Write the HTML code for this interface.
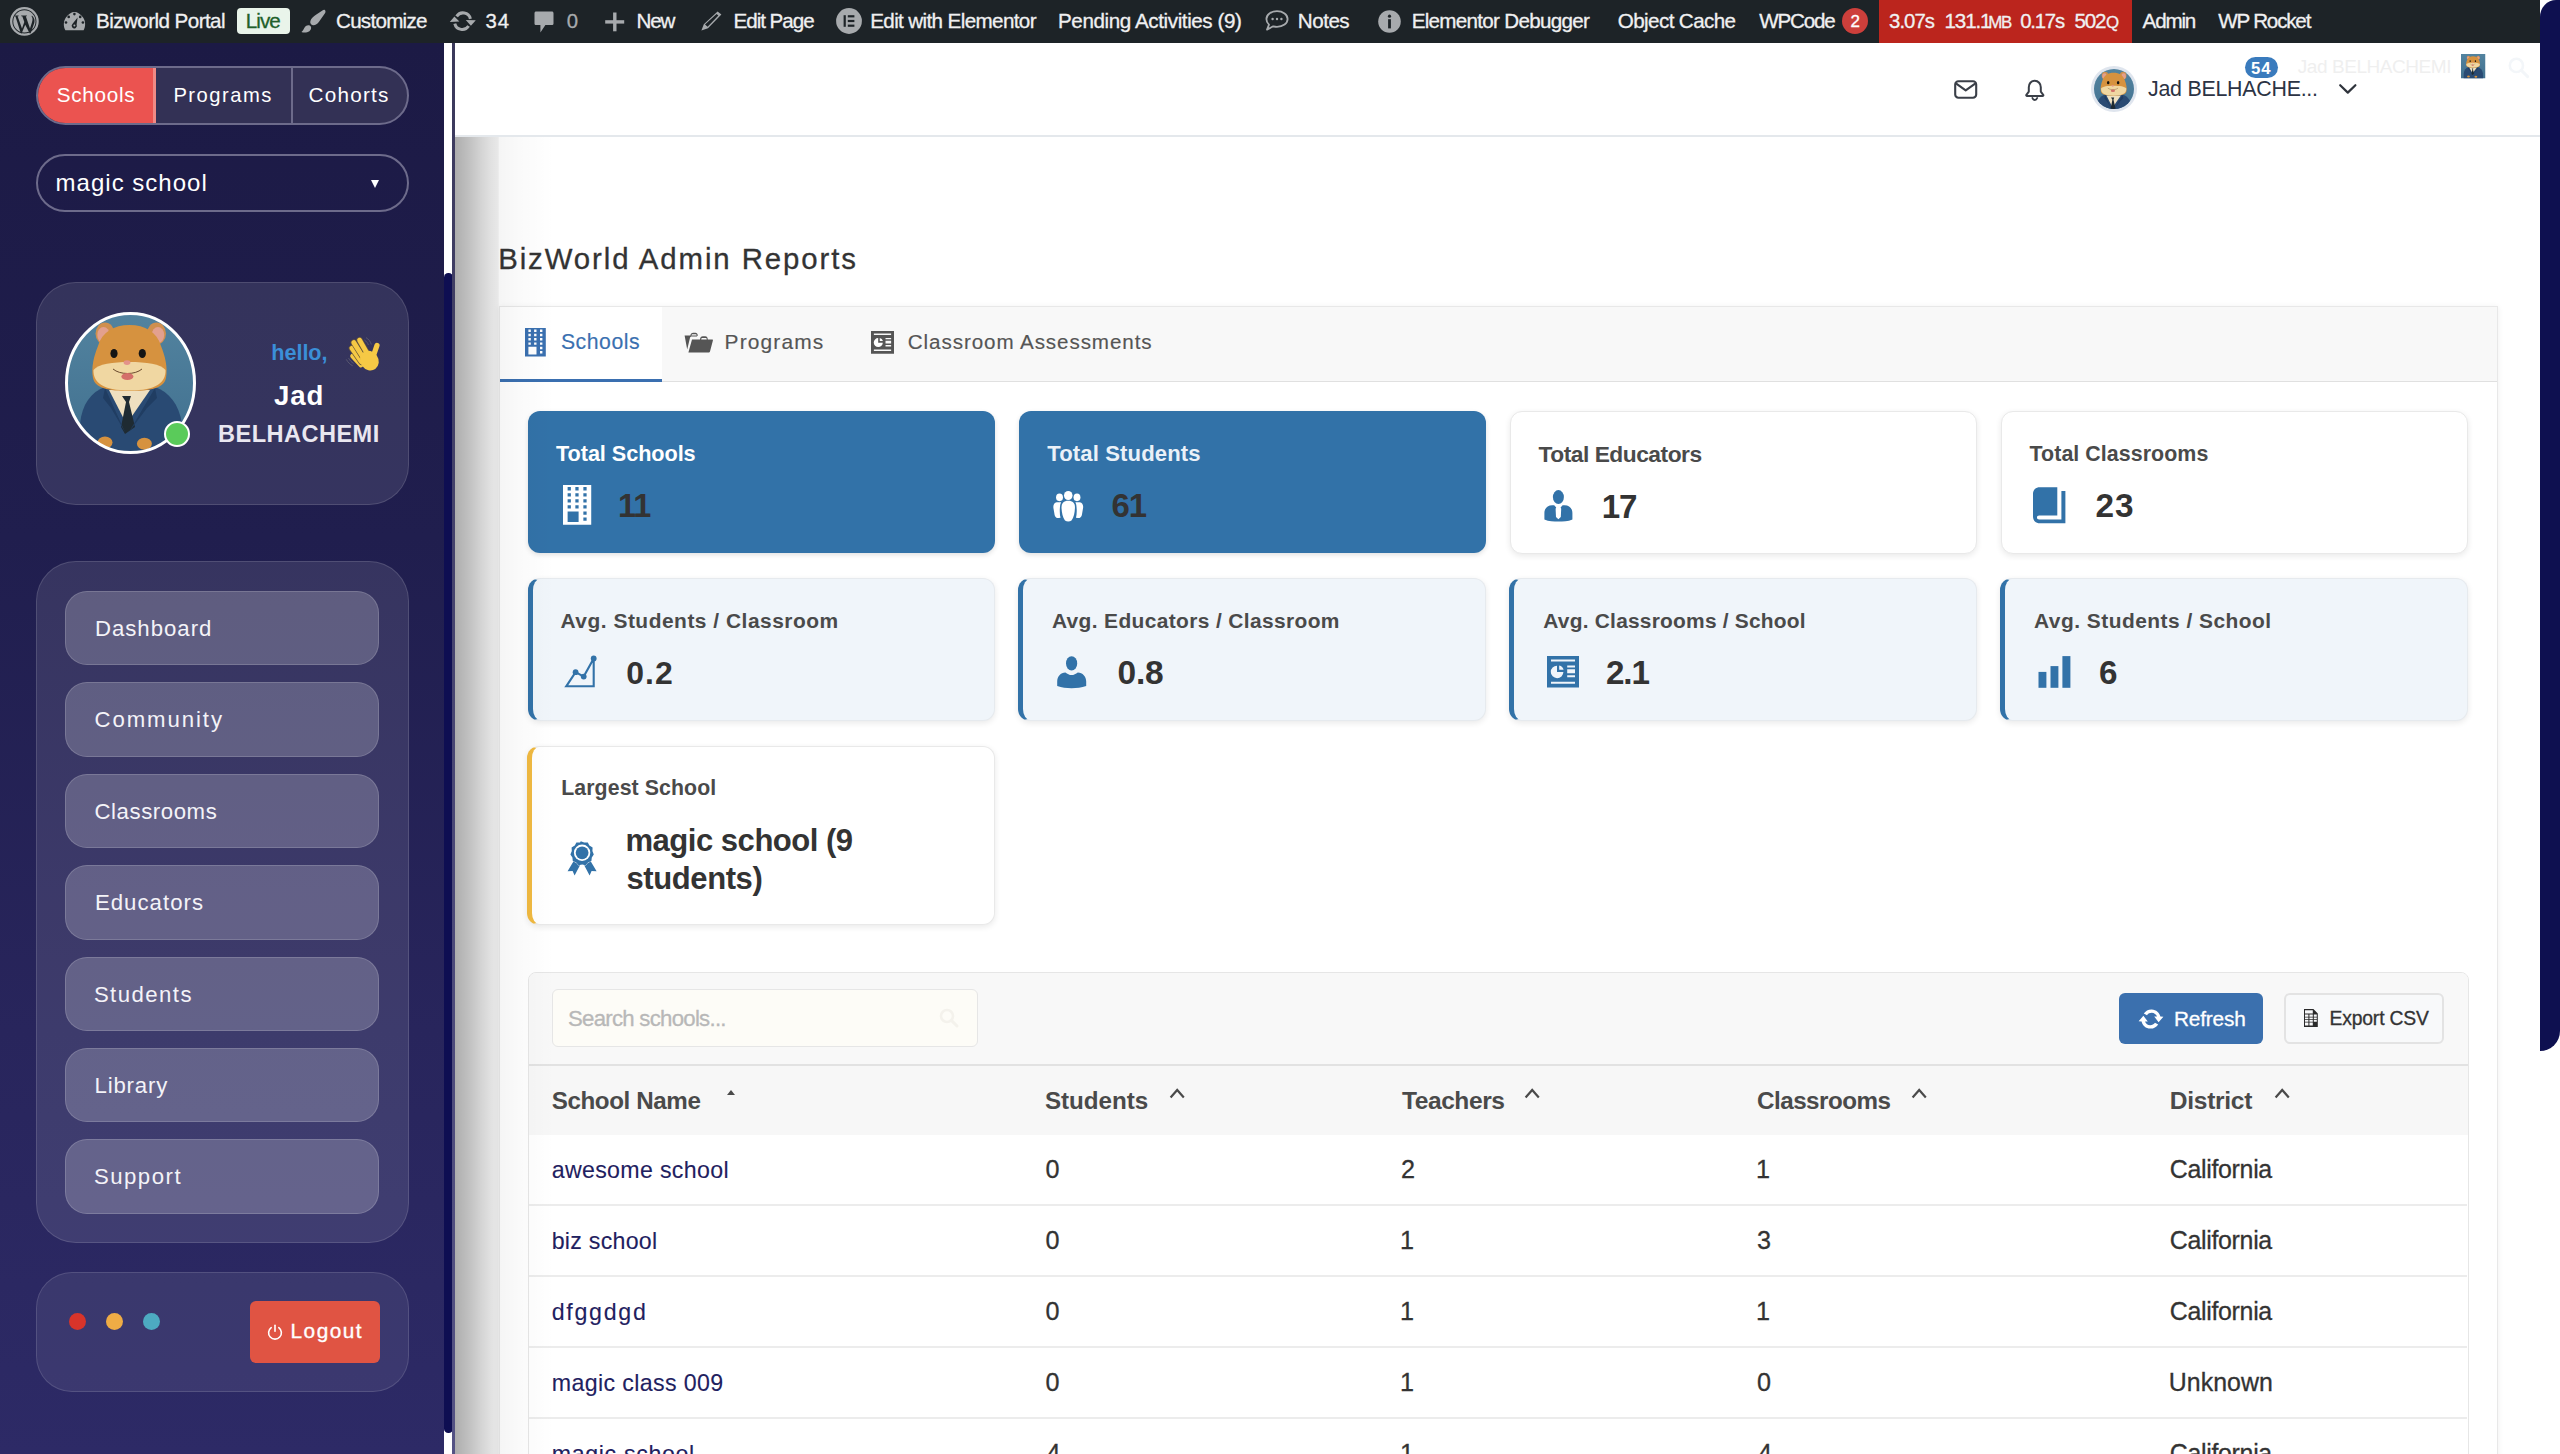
<!DOCTYPE html>
<html><head><meta charset="utf-8"><style>
html,body{margin:0;padding:0}
body{width:2560px;height:1454px;overflow:hidden;position:relative;background:#ffffff;font-family:"Liberation Sans",sans-serif}
.a{position:absolute;box-sizing:border-box}
.t{position:absolute;white-space:nowrap;font-family:"Liberation Sans",sans-serif}
svg{position:absolute;overflow:visible}
.glass{position:absolute;box-sizing:border-box;background:rgba(255,255,255,0.10);border:1.5px solid rgba(255,255,255,0.13)}
.nbtn{position:absolute;box-sizing:border-box;left:65px;width:314px;height:74.6px;border-radius:22px;background:rgba(255,255,255,0.20);border:1.5px solid rgba(255,255,255,0.16)}
.card{position:absolute;box-sizing:border-box;border-radius:12px}
.c1{background:#3272a8;box-shadow:0 2px 5px rgba(0,0,0,0.12)}
.c2{background:#ffffff;border:1.5px solid #e9e9e9;box-shadow:0 2px 6px rgba(0,0,0,0.09)}
.c3{background:#f0f5fa;border:1.5px solid #e6eaee;border-left:5px solid #3272a8;box-shadow:0 2px 6px rgba(0,0,0,0.09)}
.c4{background:#ffffff;border:1.5px solid #e9e9e9;border-left:5px solid #f0b941;box-shadow:0 2px 6px rgba(0,0,0,0.09)}
.rowline{position:absolute;left:529px;width:1938px;height:2px;background:#ececec}
</style></head><body>

<svg width="0" height="0" style="position:absolute;left:0;top:0">
 <defs>
  <linearGradient id="hbg" x1="0" y1="0" x2="0" y2="1"><stop offset="0" stop-color="#52839f"/><stop offset="1" stop-color="#41708f"/></linearGradient>
  <symbol id="ham" viewBox="0 0 131 142">
   <rect x="0" y="0" width="131" height="142" fill="url(#hbg)"/>
   <ellipse cx="40" cy="21.5" rx="9.5" ry="11" fill="#cf8f4e"/><ellipse cx="38.5" cy="23" rx="6.2" ry="8" fill="#e3a08e"/>
   <ellipse cx="91.5" cy="21.5" rx="9.5" ry="11" fill="#cf8f4e"/><ellipse cx="93" cy="23" rx="6.2" ry="8" fill="#e3a08e"/>
   <path d="M14 142 L15 112 C17 92 26 80 40 75 L90 75 C104 80 114 92 117 112 L118 142 Z" fill="#294a73"/>
   <path d="M44 78 L61.5 112 L85 78 Z" fill="#efe0c0"/>
   <path d="M57 84 L66 84 L64 90 L70 115 L60 122 L56 115 L61 90 Z" fill="#1f2b32"/>
   <path d="M40 76 L60 120 L46 96 L38 86 Z" fill="#203d62"/><path d="M90 76 L64 120 L82 96 L92 86 Z" fill="#203d62"/>
   <path d="M64.5 13 C80 13 92 20 96 34 C100 44 103 55 101 66 C99 76 86 79 64.5 79 C43 79 30 76 28 66 C26 55 29 44 33 34 C37 20 49 13 64.5 13 Z" fill="#d6923f"/>
   <path d="M28.5 58 C33 52 48 50 64.5 50 C81 50 96 52 100.5 58 C101 70 92 78.5 64.5 78.5 C37 78.5 28 70 28.5 58 Z" fill="#f0d7a2"/>
   <ellipse cx="49" cy="41.5" rx="3.6" ry="4.6" fill="#141414"/><ellipse cx="77.3" cy="41.5" rx="3.6" ry="4.6" fill="#141414"/>
   <ellipse cx="62" cy="50.6" rx="3.4" ry="2.3" fill="#e3928a"/>
   <path d="M48 57 C55 63 70 63 77 57" fill="none" stroke="#5a3a20" stroke-width="0.9"/>
   <ellipse cx="62.4" cy="64.5" rx="6" ry="3.6" fill="#d4706a"/>
   <ellipse cx="40" cy="130.6" rx="7.5" ry="6" fill="#d6923f"/><ellipse cx="79.4" cy="131.7" rx="7.5" ry="6" fill="#d6923f"/>
  </symbol>
 </defs>
</svg>

<!-- admin bar -->
<div class="a" style="left:0;top:0;width:2540px;height:43px;background:#1d2327"></div>
<div class="a" style="left:1879px;top:0;width:253.4px;height:43px;background:#bb251d"></div>
<!-- wp logo -->
<svg style="left:9.7px;top:6.9px" width="29" height="29" viewBox="0 0 29 29">
  <circle cx="14.4" cy="14.4" r="13.2" fill="none" stroke="#a7aaad" stroke-width="2.3"/>
  <circle cx="14.4" cy="14.4" r="11.1" fill="#a7aaad"/>
  <path d="M4.3 8.4 L8.6 8.4 L8.6 9.2 L7.6 9.3 L12.0 21.6 L14.3 15.0 L12.3 9.3 L11.2 9.2 L11.2 8.4 L16.9 8.4 L16.9 9.2 L15.8 9.3 L20.0 21.5 L22.0 15.3 C22.9 12.4 22.6 11.0 21.6 9.6 L21.9 8.4 C24.4 10.5 25.0 13.3 24.3 16.0 L20.6 26.2 L19.8 26.6 L15.2 17.8 L11.6 26.6 L10.8 26.3 L5.4 9.3 L4.3 9.2 Z" fill="#1d2327"/>
</svg>
<!-- dashboard gauge -->
<svg style="left:62.5px;top:10.9px" width="23" height="20" viewBox="0 0 23 20">
  <path d="M2.4 19.2 C0.2 15.4 0.3 10.3 2.9 6.4 C5.2 2.9 8.7 0.9 11.5 0.9 C14.3 0.9 17.8 2.9 20.1 6.4 C22.7 10.3 22.8 15.4 20.6 19.2 Z" fill="#a7aaad"/>
  <circle cx="11.4" cy="3.1" r="1.3" fill="#1d2327"/><circle cx="5.7" cy="5.9" r="1.3" fill="#1d2327"/><circle cx="17.2" cy="5.9" r="1.3" fill="#1d2327"/>
  <circle cx="3.0" cy="11.5" r="1.3" fill="#1d2327"/><circle cx="19.9" cy="11.5" r="1.3" fill="#1d2327"/>
  <path d="M14.6 6.6 L13.6 13.6 A2.6 2.6 0 1 1 9.4 13.0 Z" fill="#1d2327"/>
  <circle cx="11.4" cy="14.6" r="1.0" fill="#a7aaad"/>
</svg>
<!-- live badge -->
<div class="a" style="left:237.3px;top:8px;width:52.7px;height:26px;background:#e9f4ea;border-radius:4px"></div>
<!-- brush -->
<svg style="left:298px;top:6px" width="32" height="32" viewBox="0 0 32 32">
  <path d="M26.8 4.0 C27.9 4.8 27.6 6.4 26.8 7.6 L21.0 15.8 C19.4 18.0 17.2 19.4 15.0 19.2 C13.0 19.0 11.8 17.2 12.4 15.0 C13.2 12.4 15.6 10.4 18.0 8.8 L24.4 4.4 C25.2 3.9 26.1 3.6 26.8 4.0 Z" fill="#a7aaad"/>
  <path d="M12.8 20.6 C11.8 18.9 9.6 18.8 7.9 20.0 C6.4 21.2 6.0 22.8 5.2 24.0 C4.6 25.0 3.8 25.6 3.4 26.0 C5.6 26.8 9.2 26.8 11.4 25.2 C13.0 24.0 13.6 22.0 12.8 20.6 Z" fill="#a7aaad"/>
</svg>
<!-- updates -->
<svg style="left:446px;top:6px" width="34" height="32" viewBox="0 0 34 32">
  <path d="M10.6 10.4 A7.6 7.6 0 0 1 24.4 12.8" fill="none" stroke="#a7aaad" stroke-width="3"/>
  <path d="M19.8 14.0 L29.8 14.2 L24.9 19.8 Z" fill="#a7aaad"/>
  <path d="M22.6 20.0 A7.6 7.6 0 0 1 8.8 17.6" fill="none" stroke="#a7aaad" stroke-width="3"/>
  <path d="M3.8 16.0 L13.4 15.6 L8.4 10.4 Z" fill="#a7aaad"/>
</svg>
<!-- comments -->
<svg style="left:534px;top:11px" width="20" height="22" viewBox="0 0 20 22">
  <path d="M2.2 0.5 L17.8 0.5 C18.8 0.5 19.5 1.2 19.5 2.2 L19.5 12.4 C19.5 13.4 18.8 14.1 17.8 14.1 L11.4 14.1 L6.4 21.5 L6.4 14.1 L2.2 14.1 C1.2 14.1 0.5 13.4 0.5 12.4 L0.5 2.2 C0.5 1.2 1.2 0.5 2.2 0.5 Z" fill="#a7aaad"/>
</svg>
<!-- plus -->
<svg style="left:605px;top:12px" width="20" height="20" viewBox="0 0 20 20">
  <rect x="8.1" y="0.5" width="3.4" height="18.8" fill="#a7aaad"/><rect x="0.2" y="8.2" width="19" height="3.4" fill="#a7aaad"/>
</svg>
<!-- pencil -->
<svg style="left:700.6px;top:11.25px" width="21" height="20" viewBox="0 0 21 20">
  <path d="M16.6 0.4 L20.4 3.6 L7.0 17.2 L0.4 19.6 L2.8 13.2 Z M4.0 13.4 L6.6 15.8 L17.4 4.6 L15.6 3.0 Z" fill="#a7aaad" fill-rule="evenodd"/>
</svg>
<!-- elementor -->
<svg style="left:836px;top:7.5px" width="26" height="26" viewBox="0 0 26 26">
  <circle cx="13" cy="13" r="12.9" fill="#a7aaad"/>
  <rect x="7.6" y="7.2" width="2.2" height="11.6" fill="#1d2327"/>
  <rect x="11.8" y="7.2" width="6.6" height="2.2" fill="#1d2327"/><rect x="11.8" y="11.9" width="6.6" height="2.2" fill="#1d2327"/><rect x="11.8" y="16.6" width="6.6" height="2.2" fill="#1d2327"/>
</svg>
<!-- notes bubble -->
<svg style="left:1265.3px;top:10px" width="24" height="21" viewBox="0 0 24 21">
  <path d="M12 1.2 C18 1.2 22.6 4.7 22.6 9.0 C22.6 13.3 18 16.8 12 16.8 C10.6 16.8 9.4 16.6 8.2 16.3 L2.0 19.6 L4.0 14.6 C2.4 13.2 1.4 11.2 1.4 9.0 C1.4 4.7 6.0 1.2 12 1.2 Z" fill="none" stroke="#a7aaad" stroke-width="1.8" stroke-linejoin="round"/>
  <circle cx="7.6" cy="9" r="1.2" fill="#a7aaad"/><circle cx="12" cy="9" r="1.2" fill="#a7aaad"/><circle cx="16.4" cy="9" r="1.2" fill="#a7aaad"/>
</svg>
<!-- info -->
<svg style="left:1377.8px;top:9.7px" width="23" height="23" viewBox="0 0 23 23">
  <circle cx="11.5" cy="11.5" r="11.3" fill="#a7aaad"/>
  <circle cx="11.5" cy="6.2" r="1.6" fill="#1d2327"/><rect x="10.1" y="9.2" width="2.8" height="9.2" fill="#1d2327"/>
</svg>
<!-- wpcode badge -->
<div class="a" style="left:1842.4px;top:8.2px;width:26px;height:26px;border-radius:50%;background:#cd3f3b"></div>

<!-- sidebar -->
<div class="a" style="left:0;top:43px;width:444px;height:1411px;background:linear-gradient(180deg,#1c1a45 0%,#201e4e 35%,#28255c 70%,#2d2a66 100%)"></div>
<div class="a" style="left:444px;top:43px;width:8.5px;height:1411px;background:#ffffff"></div>
<div class="a" style="left:444px;top:273px;width:8.5px;height:1160px;background:#0e0e52;border-radius:4.25px"></div>
<div class="a" style="left:452.3px;top:43px;width:2.7px;height:1411px;background:linear-gradient(180deg,#3b395b,#4a4878 60%,#545284)"></div>

<!-- segmented toggle -->
<div class="a" style="left:36px;top:66px;width:373px;height:59px;border:2px solid #6d6b8b;border-radius:30px;background:#333155;overflow:hidden">
  <div class="a" style="left:0;top:0;width:115px;height:55px;background:#eb5350"></div>
  <div class="a" style="left:114.8px;top:0;width:2.8px;height:55px;background:#f08a85"></div>
  <div class="a" style="left:252.5px;top:0;width:2px;height:55px;background:#6d6b8b"></div>
</div>
<!-- select -->
<div class="a" style="left:36px;top:154px;width:373px;height:58px;border:2px solid #6d6b8b;border-radius:30px"></div>
<div class="a" style="left:371px;top:180px;width:0;height:0;border-left:4.3px solid transparent;border-right:4.3px solid transparent;border-top:8px solid #ffffff"></div>

<!-- profile card -->
<div class="glass" style="left:35.5px;top:282px;width:373.5px;height:222.5px;border-radius:40px"></div>
<svg style="left:65px;top:312px" width="131" height="142" viewBox="0 0 131 142">
  <clipPath id="avc"><ellipse cx="65.5" cy="71" rx="64" ry="69.5"/></clipPath>
  <use href="#ham" x="0" y="0" width="131" height="142" clip-path="url(#avc)"/>
  <ellipse cx="65.5" cy="71" rx="64" ry="69.5" fill="none" stroke="#ffffff" stroke-width="3"/>
</svg>
<div class="a" style="left:163.6px;top:420.8px;width:26px;height:26px;border-radius:50%;background:#5acb5a;border:2.6px solid #ffffff"></div>
<!-- wave -->
<svg style="left:340px;top:330px" width="46" height="46" viewBox="0 0 46 46">
  <g stroke-linecap="round" fill="none">
    <line x1="12.6" y1="26" x2="21" y2="35" stroke-width="4.8" stroke="#f6c945"/>
    <line x1="11.9" y1="18.2" x2="21.5" y2="32" stroke-width="6.2" stroke="#6e5c3a"/>
    <line x1="11.9" y1="18.2" x2="21.5" y2="32" stroke-width="4.8" stroke="#f6c945"/>
    <line x1="13.8" y1="12.6" x2="23.5" y2="28" stroke-width="6.2" stroke="#6e5c3a"/>
    <line x1="13.8" y1="12.6" x2="23.5" y2="28" stroke-width="4.8" stroke="#f6c945"/>
    <line x1="19.6" y1="10.2" x2="28" y2="25" stroke-width="6.2" stroke="#6e5c3a"/>
    <line x1="19.6" y1="10.2" x2="28" y2="25" stroke-width="4.8" stroke="#f6c945"/>
    <line x1="37" y1="15.4" x2="33" y2="27" stroke-width="5.2" stroke="#f6c945"/>
  </g>
  <path d="M12 25.5 L17 24 L9 18 L11 15 L15 12 L20 9 L36 24 L38.5 27 C40 33 38 39 31.5 40.6 C26 41.8 21 38.6 15.6 33.6 C14 32 12.6 30 12 28 Z" fill="none"/>
  <ellipse cx="29.4" cy="30.6" rx="9" ry="10.2" transform="rotate(-35 29.4 30.6)" fill="#f6c945"/>
  <path d="M26 7.6 C28.6 9.2 30.6 11.6 31.3 14.5" fill="none" stroke="#5c5b72" stroke-width="0.9"/>
  <path d="M24.4 10 C26.4 11.4 27.8 13 28.4 15" fill="none" stroke="#5c5b72" stroke-width="0.9"/>
  <path d="M6.3 29.4 C8 32.4 10 34.4 12.7 35.8" fill="none" stroke="#5c5b72" stroke-width="0.9"/>
  <path d="M8.6 28.2 C10 30.6 11.6 32.2 13.6 33.4" fill="none" stroke="#5c5b72" stroke-width="0.9"/>
</svg>

<!-- nav card -->
<div class="glass" style="left:35.5px;top:561px;width:373.5px;height:682px;border-radius:40px"></div>
<div class="nbtn" style="top:590.9px"></div>
<div class="nbtn" style="top:682.3px"></div>
<div class="nbtn" style="top:773.7px"></div>
<div class="nbtn" style="top:865.1px"></div>
<div class="nbtn" style="top:956.5px"></div>
<div class="nbtn" style="top:1047.9px"></div>
<div class="nbtn" style="top:1139.3px"></div>

<!-- bottom card -->
<div class="glass" style="left:35.5px;top:1272px;width:373.5px;height:120px;border-radius:36px;background:rgba(255,255,255,0.075)"></div>
<div class="a" style="left:69.2px;top:1312.8px;width:17px;height:17px;border-radius:50%;background:#d8342a"></div>
<div class="a" style="left:106.2px;top:1312.8px;width:17px;height:17px;border-radius:50%;background:#efac45"></div>
<div class="a" style="left:143px;top:1312.8px;width:17px;height:17px;border-radius:50%;background:#4daac1"></div>
<div class="a" style="left:250px;top:1301px;width:130px;height:61.6px;border-radius:6px;background:#e05443"></div>
<svg style="left:267px;top:1324px" width="16" height="16" viewBox="0 0 16 16">
  <path d="M4.2 3.6 A6.4 6.4 0 1 0 11.8 3.6" fill="none" stroke="#ffffff" stroke-width="1.6" stroke-linecap="round"/>
  <path d="M8 1.2 L8 7.2" stroke="#ffffff" stroke-width="1.6" stroke-linecap="round"/>
</svg>

<!-- main header -->
<div class="a" style="left:455px;top:43px;width:2085px;height:93px;background:#ffffff"></div>
<div class="a" style="left:455px;top:135px;width:2085px;height:2px;background:#e4e8ec"></div>

<!-- header right -->
<svg style="left:1954px;top:79.5px" width="24" height="19" viewBox="0 0 24 19">
  <rect x="1.2" y="1.2" width="21" height="16.6" rx="3.2" fill="none" stroke="#3a3f48" stroke-width="2.1"/>
  <path d="M2.6 3.8 L11.7 10.4 L20.8 3.8" fill="none" stroke="#3a3f48" stroke-width="2.1" stroke-linejoin="round" stroke-linecap="round"/>
</svg>
<svg style="left:2024.5px;top:78.5px" width="20" height="22" viewBox="0 0 20 22">
  <path d="M9.7 1.8 C6.0 1.8 3.8 4.8 3.8 8.2 L3.8 12.6 L1.4 15.8 C1.0 16.4 1.4 17.0 2.0 17.0 L17.6 17.0 C18.2 17.0 18.6 16.4 18.2 15.8 L15.8 12.6 L15.8 8.2 C15.8 4.8 13.4 1.8 9.7 1.8 Z" fill="none" stroke="#3a3f48" stroke-width="2" stroke-linejoin="round"/>
  <path d="M7.4 19.0 C8.0 20.4 8.8 21.0 9.8 21.0 C10.8 21.0 11.6 20.4 12.2 19.0" fill="none" stroke="#3a3f48" stroke-width="1.9" stroke-linecap="round"/>
</svg>
<div class="a" style="left:2090.5px;top:66px;width:46px;height:46px;border-radius:50%;background:#dfe5ee"></div>
<svg style="left:2093.5px;top:69px" width="40" height="40" viewBox="0 0 40 40">
  <clipPath id="hc1"><circle cx="20" cy="20" r="20"/></clipPath>
  <g clip-path="url(#hc1)"><use href="#ham" x="-3" y="-1" width="46" height="50"/></g>
</svg>
<svg style="left:2338.5px;top:84px" width="18" height="10" viewBox="0 0 18 10">
  <path d="M1.2 1.2 L8.8 8.6 L16.4 1.2" fill="none" stroke="#2f343c" stroke-width="2.2" stroke-linecap="round" stroke-linejoin="round"/>
</svg>
<div class="a" style="left:2244.6px;top:57px;width:33.4px;height:21px;border-radius:11px;background:#3a7bbd"></div>
<svg style="left:2460.6px;top:54.3px" width="24.5" height="24.5" viewBox="0 0 131 142" preserveAspectRatio="none">
  <use href="#ham" x="0" y="0" width="131" height="142"/>
</svg>
<svg style="left:2507.5px;top:56.5px" width="21" height="21" viewBox="0 0 21 21">
  <circle cx="8.4" cy="8.4" r="6.6" fill="none" stroke="#f3f6f9" stroke-width="2.6"/>
  <path d="M13.4 13.4 L19.6 19.6" stroke="#f3f6f9" stroke-width="3" stroke-linecap="round"/>
</svg>

<!-- right navy strip -->
<div class="a" style="left:2540px;top:0;width:20px;height:1051px;background:#0e1050;border-top-left-radius:16px 17px;border-bottom-right-radius:20px"></div>

<!-- tabs container -->
<div class="a" style="left:498.5px;top:306px;width:1999px;height:1200px;background:#ffffff;border:1.5px solid #e8e8e8;box-shadow:0 1px 6px rgba(0,0,0,0.07)"></div>
<div class="a" style="left:499.5px;top:307px;width:1997px;height:75px;background:#f8f8f8;border-bottom:1.5px solid #e0e0e0"></div>
<div class="a" style="left:499.5px;top:307px;width:162.5px;height:74px;background:#ffffff"></div>
<div class="a" style="left:499.5px;top:378.5px;width:162.5px;height:3px;background:#3a6fb0"></div>

<!-- tab icons -->
<svg style="left:525px;top:327.5px" width="21" height="28.5" viewBox="0 0 21 28.5">
  <path fill="#3a70b0" fill-rule="evenodd" d="M0 0 H20.8 V28.4 H0 Z M3.4 1.5 h2.4 v2.4 h-2.4 Z M9.1 1.5 h2.4 v2.4 h-2.4 Z M15 1.5 h2.4 v2.4 h-2.4 Z M3.4 5.8 h2.4 v2.4 h-2.4 Z M9.1 5.8 h2.4 v2.4 h-2.4 Z M15 5.8 h2.4 v2.4 h-2.4 Z M3.4 10.1 h2.4 v2.4 h-2.4 Z M9.1 10.1 h2.4 v2.4 h-2.4 Z M15 10.1 h2.4 v2.4 h-2.4 Z M3.4 14.4 h2.4 v2.4 h-2.4 Z M9.1 14.4 h2.4 v2.4 h-2.4 Z M15 14.4 h2.4 v2.4 h-2.4 Z M15 18.8 h2.4 v2.4 h-2.4 Z M15 23.1 h2.4 v2.4 h-2.4 Z M3.4 18.8 h8.1 v7.6 h-8.1 Z"/>
</svg>
<svg style="left:684px;top:331.5px" width="30" height="21" viewBox="0 0 30 21">
  <path fill="#555555" d="M0.6 3.6 L6.4 3.6 C6.6 1.6 7.6 0.8 9.2 0.8 L11.4 0.8 C12.8 0.8 13.6 1.8 13.8 3.4 L12.8 4.4 L7.6 4.4 C6.8 4.4 6.2 5.0 6.0 5.8 L3.2 17.6 Z"/>
  <path fill="#555555" d="M8.0 7.4 L16.0 7.4 C16.2 5.4 17.2 4.2 18.8 4.2 L21.2 4.2 C22.8 4.2 23.6 5.4 23.8 7.4 L28.2 7.4 C28.8 7.4 29.0 7.8 28.9 8.4 L26.0 19.4 C25.8 20.0 25.4 20.4 24.8 20.4 L4.4 20.4 Z"/>
  <path fill="#f8f8f8" d="M18.4 6.0 L21.6 6.0 C22.4 6.0 22.6 6.4 22.8 7.4 L17.2 7.4 C17.4 6.4 17.6 6.0 18.4 6.0 Z M8.6 2.2 L11.8 2.2 C12.4 2.2 12.6 2.8 12.7 3.6 L7.4 3.6 C7.6 2.6 8.0 2.2 8.6 2.2 Z"/>
</svg>
<svg style="left:871.3px;top:330.7px" width="23" height="23" viewBox="0 0 32 32">
  <path fill="#555555" fill-rule="evenodd" d="M0 0 H32 V31.7 H0 Z M4 3.6 h24 v2 h-24 Z M4 25.9 h24 v2 h-24 Z M20.2 9.6 h7.8 v1.9 h-7.8 Z M20.2 13.5 h7.8 v4 h-7.8 Z M20.2 19.5 h7.8 v1.9 h-7.8 Z"/>
  <path fill="#ffffff" d="M10 9.8 L10 16.2 L16.4 16.2 A6.3 6.3 0 1 1 10 9.8 Z"/>
  <path fill="#ffffff" d="M12.2 9.6 A6 6 0 0 1 16.6 14 L12.2 14 Z"/>
</svg>

<!-- row 1 cards -->
<div class="card c1" style="left:528px;top:411.2px;width:466.8px;height:141.8px"></div>
<div class="card c1" style="left:1018.8px;top:411.2px;width:466.8px;height:141.8px"></div>
<div class="card c2" style="left:1509.6px;top:411.2px;width:467.6px;height:142.6px"></div>
<div class="card c2" style="left:2000.6px;top:411.2px;width:467.2px;height:142.6px"></div>

<!-- row 2 cards -->
<div class="card c3" style="left:527.6px;top:578.3px;width:467.6px;height:142.4px"></div>
<div class="card c3" style="left:1018.4px;top:578.3px;width:467.2px;height:142.4px"></div>
<div class="card c3" style="left:1509.4px;top:578.3px;width:467.8px;height:142.4px"></div>
<div class="card c3" style="left:2000.4px;top:578.3px;width:467.4px;height:142.4px"></div>

<!-- row 3 -->
<div class="card c4" style="left:527.3px;top:745.8px;width:467.8px;height:179px"></div>

<!-- card icons -->
<svg style="left:562.5px;top:485px" width="28.5" height="40" viewBox="0 0 21 28.5" preserveAspectRatio="none">
  <path fill="#ffffff" fill-rule="evenodd" d="M0 0 H20.8 V28.4 H0 Z M3.4 1.5 h2.4 v2.4 h-2.4 Z M9.1 1.5 h2.4 v2.4 h-2.4 Z M15 1.5 h2.4 v2.4 h-2.4 Z M3.4 5.8 h2.4 v2.4 h-2.4 Z M9.1 5.8 h2.4 v2.4 h-2.4 Z M15 5.8 h2.4 v2.4 h-2.4 Z M3.4 10.1 h2.4 v2.4 h-2.4 Z M9.1 10.1 h2.4 v2.4 h-2.4 Z M15 10.1 h2.4 v2.4 h-2.4 Z M3.4 14.4 h2.4 v2.4 h-2.4 Z M9.1 14.4 h2.4 v2.4 h-2.4 Z M15 14.4 h2.4 v2.4 h-2.4 Z M15 18.8 h2.4 v2.4 h-2.4 Z M15 23.1 h2.4 v2.4 h-2.4 Z M3.4 18.8 h8.1 v7.6 h-8.1 Z"/>
</svg>
<svg style="left:1052.5px;top:491px" width="30.5" height="30.5" viewBox="0 0 30 30">
  <ellipse cx="6.4" cy="6.2" rx="3.4" ry="3.8" fill="#fff"/><ellipse cx="23.6" cy="6.2" rx="3.4" ry="3.8" fill="#fff"/>
  <ellipse cx="15" cy="4.4" rx="4.2" ry="4.4" fill="#fff"/>
  <path fill="#fff" d="M3.6 11.0 C1.2 11.6 0.0 13.6 0.4 16.6 L1.6 23.6 C2.0 25.8 3.6 26.8 5.6 26.6 L7.4 26.4 C6.6 23.0 6.4 19.0 7.0 14.4 C7.2 12.8 7.6 11.8 8.0 11.0 Z"/>
  <path fill="#fff" d="M26.4 11.0 C28.8 11.6 30.0 13.6 29.6 16.6 L28.4 23.6 C28.0 25.8 26.4 26.8 24.4 26.6 L22.6 26.4 C23.4 23.0 23.6 19.0 23.0 14.4 C22.8 12.8 22.4 11.8 22.0 11.0 Z"/>
  <path fill="#fff" d="M15 9.6 C10.4 9.6 8.2 12.0 8.4 16.8 C8.6 21.4 9.6 26.4 11.8 29.0 C13.6 30.4 16.4 30.4 18.2 29.0 C20.4 26.4 21.4 21.4 21.6 16.8 C21.8 12.0 19.6 9.6 15 9.6 Z"/>
</svg>
<svg style="left:1544px;top:489.5px" width="29" height="32" viewBox="0 0 29 32">
  <ellipse cx="14.4" cy="7.1" rx="5.5" ry="7" fill="#3272a8"/>
  <path fill="#3272a8" d="M0.4 29.6 L0.4 23.0 C0.4 18.2 3.8 15.2 8.2 15.2 L10.2 15.2 L12.2 17.6 L11.6 18.8 L12.0 27.0 L14.4 29.2 L16.8 27.0 L17.2 18.8 L16.6 17.6 L18.6 15.2 L20.6 15.2 C25.0 15.2 28.4 18.2 28.4 23.0 L28.4 29.6 C24.0 31.6 19.0 31.6 14.4 31.6 C9.8 31.6 4.8 31.6 0.4 29.6 Z"/>
</svg>
<svg style="left:2033.4px;top:487px" width="32.5" height="36.2" viewBox="0 0 32.5 36.2">
  <path fill="#3272a8" d="M24.3 0.2 L24.3 28.4 L6.2 28.4 C4.6 28.4 4.0 29.2 4.0 30.4 C4.0 31.6 4.6 32.4 6.2 32.4 L28.4 32.4 L28.4 4.0 L32.4 4.0 L32.4 36.2 L6.8 36.2 C2.8 36.2 0.0 33.4 0.0 29.4 L0.0 6.8 C0.0 2.8 2.8 0.2 6.8 0.2 Z"/>
</svg>
<svg style="left:555px;top:645px" width="60" height="50" viewBox="0 0 60 50">
  <path d="M11.2 41.3 L20.6 27.2 L28.7 31.6 L38.7 13.4 L38.7 41.3 Z" fill="none" stroke="#3272a8" stroke-width="2.1" stroke-linejoin="miter"/>
  <circle cx="20.6" cy="27.2" r="2.9" fill="#3272a8"/><circle cx="28.7" cy="31.6" r="2.9" fill="#3272a8"/><circle cx="38.7" cy="13.4" r="2.9" fill="#3272a8"/>
</svg>
<svg style="left:1057.2px;top:655.5px" width="29.5" height="32.5" viewBox="0 0 29.5 32.5">
  <ellipse cx="14.6" cy="7.4" rx="5.6" ry="7.2" fill="#3272a8"/>
  <path fill="#3272a8" d="M0.2 30.0 L0.2 25.4 C0.2 20.4 3.6 16.4 8.4 16.4 C10.4 17.8 12.4 19.0 14.6 19.0 C16.8 19.0 18.8 17.8 20.8 16.4 C25.6 16.4 29.2 20.4 29.2 25.4 L29.2 30.0 C24.6 31.8 19.6 32.2 14.6 32.2 C9.6 32.2 4.6 31.8 0.2 30.0 Z"/>
</svg>
<svg style="left:1546.8px;top:655.6px" width="32" height="31.7" viewBox="0 0 32 32" preserveAspectRatio="none">
  <path fill="#3272a8" fill-rule="evenodd" d="M0 0 H32 V31.7 H0 Z M4 3.6 h24 v2 h-24 Z M4 25.9 h24 v2 h-24 Z M20.2 9.6 h7.8 v1.9 h-7.8 Z M20.2 13.5 h7.8 v4 h-7.8 Z M20.2 19.5 h7.8 v1.9 h-7.8 Z"/>
  <path fill="#f0f5fa" d="M10 9.8 L10 16.2 L16.4 16.2 A6.3 6.3 0 1 1 10 9.8 Z"/>
  <path fill="#f0f5fa" d="M12.2 9.6 A6 6 0 0 1 16.6 14 L12.2 14 Z"/>
</svg>
<svg style="left:2037.5px;top:655.5px" width="33" height="32" viewBox="0 0 33 32">
  <rect x="0.5" y="15.9" width="7.9" height="15.9" fill="#3272a8"/>
  <rect x="12.5" y="10.1" width="7.9" height="21.7" fill="#3272a8"/>
  <rect x="24.4" y="0.1" width="8" height="31.7" fill="#3272a8"/>
</svg>
<svg style="left:566px;top:841px" width="30" height="35" viewBox="0 0 30 35">
  <path fill="#3272a8" d="M14.8 0.2 L18.2 1.6 L21.8 1.4 L23.4 4.6 L26.6 6.4 L26.4 10.0 L27.8 13.4 L25.8 16.4 L25.4 20.0 L22.0 21.4 L19.6 24.2 L16.2 23.4 L12.6 24.2 L10.2 21.4 L6.8 20.0 L6.4 16.4 L4.4 13.4 L5.8 10.0 L5.6 6.4 L8.8 4.6 L10.4 1.4 L14.0 1.6 Z"/>
  <circle cx="16.1" cy="11.8" r="8.2" fill="#ffffff"/><circle cx="16.1" cy="11.8" r="6.4" fill="#3272a8"/>
  <path fill="#3272a8" d="M7.4 20.6 L10.6 22.2 L12.4 24.6 L14.0 24.2 L8.6 34.4 L6.6 30.0 L1.6 30.2 Z"/>
  <path fill="#3272a8" d="M24.8 20.6 L21.6 22.2 L19.8 24.6 L18.2 24.2 L23.6 34.4 L25.6 30.0 L30.6 30.2 Z"/>
</svg>

<!-- table -->
<div class="a" style="left:527.5px;top:971.5px;width:1941px;height:620px;background:#ffffff;border:1.5px solid #e6e6e6;border-radius:8px;overflow:hidden">
  <div class="a" style="left:0;top:0;width:1941px;height:93.5px;background:#f8f8f8;border-bottom:2px solid #e2e2e2"></div>
  <div class="a" style="left:0;top:93.5px;width:1941px;height:69px;background:#f7f7f7"></div>
</div>
<div class="a" style="left:551.5px;top:989px;width:426px;height:58px;background:#fdfcf7;border:1.5px solid #e6e6e6;border-radius:6px"></div>
<svg style="left:939px;top:1008px" width="20" height="20" viewBox="0 0 20 20">
  <circle cx="8" cy="8" r="6" fill="none" stroke="#f4f2ec" stroke-width="2.6"/>
  <path d="M12.6 12.6 L18 18" stroke="#f4f2ec" stroke-width="3" stroke-linecap="round"/>
</svg>
<div class="a" style="left:2119px;top:992.8px;width:143.8px;height:51.2px;background:#3b70ae;border-radius:6px"></div>
<svg style="left:2138px;top:1008.5px" width="26" height="20" viewBox="0 0 26 20">
  <path fill="#ffffff" d="M5.8 4.6 C7.6 1.8 10.6 0.2 13.8 0.4 C18.2 0.6 21.6 3.6 22.4 7.6 L25.4 7.8 L20.6 13.2 L16.2 7.4 L19.0 7.6 C18.2 5.4 16.2 4.0 13.8 3.8 C11.8 3.8 10.2 4.6 9.0 6.2 Z"/>
  <path fill="#ffffff" d="M20.2 15.4 C18.4 18.2 15.4 19.8 12.2 19.6 C7.8 19.4 4.4 16.4 3.6 12.4 L0.6 12.2 L5.4 6.8 L9.8 12.6 L7.0 12.4 C7.8 14.6 9.8 16.0 12.2 16.2 C14.2 16.2 15.8 15.4 17.0 13.8 Z"/>
</svg>
<div class="a" style="left:2284.3px;top:993px;width:160px;height:50.5px;background:#f8f9fa;border:2px solid #e3e3e3;border-radius:6px"></div>
<svg style="left:2304.2px;top:1008.7px" width="14" height="18" viewBox="0 0 14 18">
  <path fill="#2a2a2a" fill-rule="evenodd" d="M0 0 L9.4 0 L13.8 4.6 L13.8 18 L0 18 Z M1 1.2 h7.8 v3.4 h-7.8 Z M1 5.6 h3.4 v2.2 h-3.4 Z M5.4 5.6 h3.4 v2.2 h-3.4 Z M9.8 5.6 h3.0 v2.2 h-3.0 Z M1 8.6 h3.4 v1.6 h-3.4 Z M5.4 8.6 h3.4 v1.6 h-3.4 Z M9.8 8.6 h3.0 v1.6 h-3.0 Z M1 11.0 h3.4 v1.8 h-3.4 Z M5.4 11.0 h3.4 v1.8 h-3.4 Z M9.8 11.0 h3.0 v1.8 h-3.0 Z M1 13.6 h3.4 v3.0 h-3.4 Z M5.4 13.6 h3.4 v3.0 h-3.4 Z"/>
</svg>
<!-- sort icons -->
<div class="a" style="left:726.9px;top:1090.3px;width:0;height:0;border-left:4px solid transparent;border-right:4px solid transparent;border-bottom:5.6px solid #4a4a4a"></div>
<svg style="left:1169px;top:1088px" width="17" height="11" viewBox="0 0 17 11"><path d="M1.6 9.4 L8.2 2.0 L14.8 9.4" fill="none" stroke="#4a4a4a" stroke-width="2.2"/></svg>
<svg style="left:1524px;top:1088px" width="17" height="11" viewBox="0 0 17 11"><path d="M1.6 9.4 L8.2 2.0 L14.8 9.4" fill="none" stroke="#4a4a4a" stroke-width="2.2"/></svg>
<svg style="left:1911px;top:1088px" width="17" height="11" viewBox="0 0 17 11"><path d="M1.6 9.4 L8.2 2.0 L14.8 9.4" fill="none" stroke="#4a4a4a" stroke-width="2.2"/></svg>
<svg style="left:2273.5px;top:1088px" width="17" height="11" viewBox="0 0 17 11"><path d="M1.6 9.4 L8.2 2.0 L14.8 9.4" fill="none" stroke="#4a4a4a" stroke-width="2.2"/></svg>
<!-- row lines -->
<div class="rowline" style="top:1204px"></div>
<div class="rowline" style="top:1275px"></div>
<div class="rowline" style="top:1346px"></div>
<div class="rowline" style="top:1417px"></div>

<span class="t" style="left:96.0px;top:11.1px;font-size:20.64px;line-height:20.64px;letter-spacing:-0.57px;color:#f0f0f1;-webkit-text-stroke:0.30px #f0f0f1;">Bizworld Portal</span>
<span class="t" style="left:245.7px;top:11.1px;font-size:20.64px;line-height:20.64px;letter-spacing:-0.90px;color:#21602a;-webkit-text-stroke:0.30px #21602a;">Live</span>
<span class="t" style="left:336.0px;top:11.1px;font-size:20.64px;line-height:20.64px;letter-spacing:-0.75px;color:#f0f0f1;-webkit-text-stroke:0.30px #f0f0f1;">Customize</span>
<span class="t" style="left:485.6px;top:11.1px;font-size:20.34px;line-height:20.34px;letter-spacing:0.80px;color:#f0f0f1;-webkit-text-stroke:0.30px #f0f0f1;">34</span>
<span class="t" style="left:566.8px;top:11.1px;font-size:20.34px;line-height:20.34px;color:#a7aaad;-webkit-text-stroke:0.30px #a7aaad;">0</span>
<span class="t" style="left:636.5px;top:11.1px;font-size:20.64px;line-height:20.64px;letter-spacing:-1.20px;color:#f0f0f1;-webkit-text-stroke:0.30px #f0f0f1;">New</span>
<span class="t" style="left:733.5px;top:11.1px;font-size:20.64px;line-height:20.64px;letter-spacing:-1.04px;color:#f0f0f1;-webkit-text-stroke:0.30px #f0f0f1;">Edit Page</span>
<span class="t" style="left:870.2px;top:11.1px;font-size:20.64px;line-height:20.64px;letter-spacing:-0.63px;color:#f0f0f1;-webkit-text-stroke:0.30px #f0f0f1;">Edit with Elementor</span>
<span class="t" style="left:1058.0px;top:11.1px;font-size:20.64px;line-height:20.64px;letter-spacing:-0.41px;color:#f0f0f1;-webkit-text-stroke:0.30px #f0f0f1;">Pending Activities (9)</span>
<span class="t" style="left:1297.8px;top:11.1px;font-size:20.64px;line-height:20.64px;letter-spacing:-0.50px;color:#f0f0f1;-webkit-text-stroke:0.30px #f0f0f1;">Notes</span>
<span class="t" style="left:1411.7px;top:11.1px;font-size:20.64px;line-height:20.64px;letter-spacing:-0.72px;color:#f0f0f1;-webkit-text-stroke:0.30px #f0f0f1;">Elementor Debugger</span>
<span class="t" style="left:1617.8px;top:11.1px;font-size:20.64px;line-height:20.64px;letter-spacing:-0.61px;color:#f0f0f1;-webkit-text-stroke:0.30px #f0f0f1;">Object Cache</span>
<span class="t" style="left:1759.2px;top:11.1px;font-size:20.64px;line-height:20.64px;letter-spacing:-1.20px;color:#f0f0f1;-webkit-text-stroke:0.30px #f0f0f1;">WPCode</span>
<span class="t" style="left:1850.5px;top:13.3px;font-size:17.00px;line-height:17.00px;color:#fff;-webkit-text-stroke:0.30px #fff;">2</span>
<span class="t" style="left:1889.0px;top:11.1px;font-size:20.34px;line-height:20.34px;letter-spacing:-0.93px;color:#f0f0f1;-webkit-text-stroke:0.30px #f0f0f1;">3.07s</span>
<span class="t" style="left:1944.6px;top:11.1px;font-size:20.64px;line-height:20.64px;letter-spacing:-1.20px;color:#f0f0f1;-webkit-text-stroke:0.30px #f0f0f1;">131.1</span>
<span class="t" style="left:1988.2px;top:15.1px;font-size:16.86px;line-height:16.86px;letter-spacing:-1.20px;color:#f0f0f1;-webkit-text-stroke:0.30px #f0f0f1;">MB</span>
<span class="t" style="left:2020.2px;top:11.1px;font-size:20.34px;line-height:20.34px;letter-spacing:-1.20px;color:#f0f0f1;-webkit-text-stroke:0.30px #f0f0f1;">0.17s</span>
<span class="t" style="left:2074.4px;top:11.1px;font-size:20.64px;line-height:20.64px;letter-spacing:-1.20px;color:#f0f0f1;-webkit-text-stroke:0.30px #f0f0f1;">502</span>
<span class="t" style="left:2106.0px;top:15.1px;font-size:16.86px;line-height:16.86px;color:#f0f0f1;-webkit-text-stroke:0.30px #f0f0f1;">Q</span>
<span class="t" style="left:2142.6px;top:11.1px;font-size:20.64px;line-height:20.64px;letter-spacing:-1.20px;color:#f0f0f1;-webkit-text-stroke:0.30px #f0f0f1;">Admin</span>
<span class="t" style="left:2218.2px;top:11.1px;font-size:20.64px;line-height:20.64px;letter-spacing:-1.20px;color:#f0f0f1;-webkit-text-stroke:0.30px #f0f0f1;">WP Rocket</span>
<span class="t" style="left:56.7px;top:85.2px;font-size:20.70px;line-height:20.70px;letter-spacing:0.73px;color:#ffffff;">Schools</span>
<span class="t" style="left:173.4px;top:85.2px;font-size:20.20px;line-height:20.20px;letter-spacing:1.50px;color:#ffffff;">Programs</span>
<span class="t" style="left:308.6px;top:85.2px;font-size:20.70px;line-height:20.70px;letter-spacing:1.23px;color:#ffffff;">Cohorts</span>
<span class="t" style="left:55.6px;top:170.9px;font-size:24.00px;line-height:24.00px;letter-spacing:1.01px;color:#ffffff;">magic school</span>
<span class="t" style="left:271.3px;top:342.0px;font-size:21.67px;line-height:21.67px;font-weight:bold;letter-spacing:-0.06px;color:#3b8fd8;">hello,</span>
<span class="t" style="left:274.0px;top:381.6px;font-size:27.62px;line-height:27.62px;font-weight:bold;letter-spacing:0.90px;color:#ffffff;">Jad</span>
<span class="t" style="left:218.0px;top:422.7px;font-size:23.55px;line-height:23.55px;font-weight:bold;letter-spacing:0.47px;color:#e9e7f0;">BELHACHEMI</span>
<span class="t" style="left:94.9px;top:618.0px;font-size:22.20px;line-height:22.20px;letter-spacing:1.00px;color:#f4f3f8;">Dashboard</span>
<span class="t" style="left:94.5px;top:709.4px;font-size:22.20px;line-height:22.20px;letter-spacing:1.91px;color:#f4f3f8;">Community</span>
<span class="t" style="left:94.5px;top:800.8px;font-size:22.20px;line-height:22.20px;letter-spacing:0.57px;color:#f4f3f8;">Classrooms</span>
<span class="t" style="left:94.9px;top:892.2px;font-size:22.20px;line-height:22.20px;letter-spacing:1.04px;color:#f4f3f8;">Educators</span>
<span class="t" style="left:93.9px;top:983.6px;font-size:22.20px;line-height:22.20px;letter-spacing:1.43px;color:#f4f3f8;">Students</span>
<span class="t" style="left:94.5px;top:1075.0px;font-size:22.20px;line-height:22.20px;letter-spacing:0.82px;color:#f4f3f8;">Library</span>
<span class="t" style="left:93.9px;top:1166.4px;font-size:22.20px;line-height:22.20px;letter-spacing:1.50px;color:#f4f3f8;">Support</span>
<span class="t" style="left:290.6px;top:1321.4px;font-size:20.79px;line-height:20.79px;letter-spacing:1.46px;color:#ffffff;-webkit-text-stroke:0.35px #ffffff;">Logout</span>
<span class="t" style="left:2148.0px;top:79.3px;font-size:21.37px;line-height:21.37px;letter-spacing:-0.24px;color:#2c3344;">Jad BELHACHE...</span>
<span class="t" style="left:2251.0px;top:60.5px;font-size:16.72px;line-height:16.72px;font-weight:bold;letter-spacing:1.00px;color:#ffffff;">54</span>
<span class="t" style="left:2297.8px;top:56.6px;font-size:19.04px;line-height:19.04px;letter-spacing:-0.46px;color:#efefef;">Jad BELHACHEMI</span>
<span class="t" style="left:498.2px;top:243.8px;font-size:29.36px;line-height:29.36px;letter-spacing:1.91px;color:#333333;-webkit-text-stroke:0.30px #333333;">BizWorld Admin Reports</span>
<span class="t" style="left:560.9px;top:332.4px;font-size:21.25px;line-height:21.25px;letter-spacing:0.52px;color:#3a70b0;-webkit-text-stroke:0.15px #3a70b0;">Schools</span>
<span class="t" style="left:724.6px;top:332.4px;font-size:20.93px;line-height:20.93px;letter-spacing:1.13px;color:#555555;-webkit-text-stroke:0.15px #555555;">Programs</span>
<span class="t" style="left:907.8px;top:332.4px;font-size:20.62px;line-height:20.62px;letter-spacing:0.91px;color:#555555;-webkit-text-stroke:0.15px #555555;">Classroom Assessments</span>
<span class="t" style="left:556.0px;top:443.2px;font-size:21.67px;line-height:21.67px;font-weight:bold;letter-spacing:-0.06px;color:#ffffff;">Total Schools</span>
<span class="t" style="left:1047.3px;top:443.4px;font-size:22.08px;line-height:22.08px;font-weight:bold;letter-spacing:0.12px;color:#eaf1f8;">Total Students</span>
<span class="t" style="left:1538.5px;top:443.0px;font-size:22.77px;line-height:22.77px;font-weight:bold;letter-spacing:-0.48px;color:#4a4a4a;">Total Educators</span>
<span class="t" style="left:2029.6px;top:444.1px;font-size:21.39px;line-height:21.39px;font-weight:bold;letter-spacing:0.06px;color:#4a4a4a;">Total Classrooms</span>
<span class="t" style="left:618.1px;top:490.2px;font-size:32.41px;line-height:32.41px;font-weight:bold;letter-spacing:-1.20px;color:#333333;">11</span>
<span class="t" style="left:1111.6px;top:490.3px;font-size:32.94px;line-height:32.94px;font-weight:bold;letter-spacing:-1.20px;color:#333333;">61</span>
<span class="t" style="left:1601.8px;top:489.5px;font-size:33.14px;line-height:33.14px;font-weight:bold;letter-spacing:-1.20px;color:#333333;">17</span>
<span class="t" style="left:2095.4px;top:489.3px;font-size:33.37px;line-height:33.37px;font-weight:bold;letter-spacing:1.10px;color:#333333;">23</span>
<span class="t" style="left:560.5px;top:611.2px;font-size:20.93px;line-height:20.93px;font-weight:bold;letter-spacing:0.51px;color:#4a4a4a;">Avg. Students / Classroom</span>
<span class="t" style="left:1051.9px;top:611.2px;font-size:20.93px;line-height:20.93px;font-weight:bold;letter-spacing:0.37px;color:#4a4a4a;">Avg. Educators / Classroom</span>
<span class="t" style="left:1543.3px;top:611.2px;font-size:20.93px;line-height:20.93px;font-weight:bold;letter-spacing:0.22px;color:#4a4a4a;">Avg. Classrooms / School</span>
<span class="t" style="left:2034.0px;top:611.2px;font-size:20.93px;line-height:20.93px;font-weight:bold;letter-spacing:0.48px;color:#4a4a4a;">Avg. Students / School</span>
<span class="t" style="left:626.3px;top:657.8px;font-size:31.94px;line-height:31.94px;font-weight:bold;letter-spacing:1.00px;color:#333333;">0.2</span>
<span class="t" style="left:1117.5px;top:656.4px;font-size:33.51px;line-height:33.51px;font-weight:bold;letter-spacing:-0.20px;color:#333333;">0.8</span>
<span class="t" style="left:1606.1px;top:656.2px;font-size:33.23px;line-height:33.23px;font-weight:bold;letter-spacing:-1.20px;color:#333333;">2.1</span>
<span class="t" style="left:2099.0px;top:656.2px;font-size:33.23px;line-height:33.23px;font-weight:bold;color:#333333;">6</span>
<span class="t" style="left:561.2px;top:778.2px;font-size:21.29px;line-height:21.29px;font-weight:bold;letter-spacing:0.10px;color:#4a4a4a;">Largest School</span>
<span class="t" style="left:625.5px;top:824.6px;font-size:31.05px;line-height:31.05px;font-weight:bold;letter-spacing:-0.50px;color:#333333;">magic school (9</span>
<span class="t" style="left:626.5px;top:862.8px;font-size:31.00px;line-height:31.00px;font-weight:bold;letter-spacing:-0.41px;color:#333333;">students)</span>
<span class="t" style="left:568.0px;top:1008.0px;font-size:22.20px;line-height:22.20px;letter-spacing:-0.73px;color:#b8b8b8;-webkit-text-stroke:0.30px #b8b8b8;">Search schools...</span>
<span class="t" style="left:2174.0px;top:1008.9px;font-size:20.79px;line-height:20.79px;letter-spacing:-0.17px;color:#ffffff;-webkit-text-stroke:0.30px #ffffff;">Refresh</span>
<span class="t" style="left:2329.5px;top:1008.7px;font-size:19.33px;line-height:19.33px;letter-spacing:-0.17px;color:#333333;-webkit-text-stroke:0.30px #333333;">Export CSV</span>
<span class="t" style="left:551.7px;top:1088.9px;font-size:24.20px;line-height:24.20px;font-weight:bold;letter-spacing:-0.40px;color:#4a4a4a;">School Name</span>
<span class="t" style="left:1045.0px;top:1088.9px;font-size:24.20px;line-height:24.20px;font-weight:bold;letter-spacing:-0.04px;color:#4a4a4a;">Students</span>
<span class="t" style="left:1402.0px;top:1088.9px;font-size:24.56px;line-height:24.56px;font-weight:bold;letter-spacing:-0.44px;color:#4a4a4a;">Teachers</span>
<span class="t" style="left:1757.0px;top:1088.9px;font-size:24.20px;line-height:24.20px;font-weight:bold;letter-spacing:-0.50px;color:#4a4a4a;">Classrooms</span>
<span class="t" style="left:2169.8px;top:1088.9px;font-size:24.56px;line-height:24.56px;font-weight:bold;letter-spacing:-0.29px;color:#4a4a4a;">District</span>
<span class="t" style="left:551.7px;top:1158.6px;font-size:23.20px;line-height:23.20px;letter-spacing:0.32px;color:#1f2160;-webkit-text-stroke:0.10px #1f2160;">awesome school</span>
<span class="t" style="left:1045.4px;top:1156.6px;font-size:25.21px;line-height:25.21px;color:#333333;-webkit-text-stroke:0.30px #333333;">0</span>
<span class="t" style="left:1401.0px;top:1156.6px;font-size:25.21px;line-height:25.21px;color:#333333;-webkit-text-stroke:0.30px #333333;">2</span>
<span class="t" style="left:1756.0px;top:1156.6px;font-size:25.21px;line-height:25.21px;color:#333333;-webkit-text-stroke:0.30px #333333;">1</span>
<span class="t" style="left:2169.8px;top:1156.6px;font-size:24.92px;line-height:24.92px;letter-spacing:-0.31px;color:#333333;-webkit-text-stroke:0.30px #333333;">California</span>
<span class="t" style="left:551.7px;top:1229.7px;font-size:23.20px;line-height:23.20px;letter-spacing:0.26px;color:#1f2160;-webkit-text-stroke:0.10px #1f2160;">biz school</span>
<span class="t" style="left:1045.4px;top:1227.7px;font-size:25.21px;line-height:25.21px;color:#333333;-webkit-text-stroke:0.30px #333333;">0</span>
<span class="t" style="left:1400.0px;top:1227.7px;font-size:25.21px;line-height:25.21px;color:#333333;-webkit-text-stroke:0.30px #333333;">1</span>
<span class="t" style="left:1757.0px;top:1227.7px;font-size:25.21px;line-height:25.21px;color:#333333;-webkit-text-stroke:0.30px #333333;">3</span>
<span class="t" style="left:2169.8px;top:1227.7px;font-size:24.92px;line-height:24.92px;letter-spacing:-0.31px;color:#333333;-webkit-text-stroke:0.30px #333333;">California</span>
<span class="t" style="left:551.7px;top:1300.8px;font-size:23.20px;line-height:23.20px;letter-spacing:1.72px;color:#1f2160;-webkit-text-stroke:0.10px #1f2160;">dfggdgd</span>
<span class="t" style="left:1045.4px;top:1298.8px;font-size:25.21px;line-height:25.21px;color:#333333;-webkit-text-stroke:0.30px #333333;">0</span>
<span class="t" style="left:1400.0px;top:1298.8px;font-size:25.21px;line-height:25.21px;color:#333333;-webkit-text-stroke:0.30px #333333;">1</span>
<span class="t" style="left:1756.0px;top:1298.8px;font-size:25.21px;line-height:25.21px;color:#333333;-webkit-text-stroke:0.30px #333333;">1</span>
<span class="t" style="left:2169.8px;top:1298.8px;font-size:24.92px;line-height:24.92px;letter-spacing:-0.31px;color:#333333;-webkit-text-stroke:0.30px #333333;">California</span>
<span class="t" style="left:551.7px;top:1371.9px;font-size:23.20px;line-height:23.20px;letter-spacing:0.38px;color:#1f2160;-webkit-text-stroke:0.10px #1f2160;">magic class 009</span>
<span class="t" style="left:1045.4px;top:1369.9px;font-size:25.21px;line-height:25.21px;color:#333333;-webkit-text-stroke:0.30px #333333;">0</span>
<span class="t" style="left:1400.0px;top:1369.9px;font-size:25.21px;line-height:25.21px;color:#333333;-webkit-text-stroke:0.30px #333333;">1</span>
<span class="t" style="left:1757.0px;top:1369.9px;font-size:25.21px;line-height:25.21px;color:#333333;-webkit-text-stroke:0.30px #333333;">0</span>
<span class="t" style="left:2168.8px;top:1369.9px;font-size:24.92px;line-height:24.92px;letter-spacing:0.03px;color:#333333;-webkit-text-stroke:0.30px #333333;">Unknown</span>
<span class="t" style="left:551.7px;top:1443.0px;font-size:23.20px;line-height:23.20px;letter-spacing:0.66px;color:#1f2160;-webkit-text-stroke:0.10px #1f2160;">magic school</span>
<span class="t" style="left:1046.4px;top:1441.0px;font-size:25.21px;line-height:25.21px;color:#333333;-webkit-text-stroke:0.30px #333333;">4</span>
<span class="t" style="left:1400.0px;top:1441.0px;font-size:25.21px;line-height:25.21px;color:#333333;-webkit-text-stroke:0.30px #333333;">1</span>
<span class="t" style="left:1758.0px;top:1441.0px;font-size:25.21px;line-height:25.21px;color:#333333;-webkit-text-stroke:0.30px #333333;">4</span>
<span class="t" style="left:2169.8px;top:1441.0px;font-size:24.92px;line-height:24.92px;letter-spacing:-0.31px;color:#333333;-webkit-text-stroke:0.30px #333333;">California</span>
<div class="a" style="left:455px;top:137px;width:100px;height:1317px;pointer-events:none;background:linear-gradient(90deg,rgba(0,0,0,0.32) 0px,rgba(0,0,0,0.24) 15px,rgba(0,0,0,0.176) 25px,rgba(0,0,0,0.12) 35px,rgba(0,0,0,0.09) 43px,rgba(0,0,0,0.04) 44.5px,rgba(0,0,0,0.02) 65px,rgba(0,0,0,0.008) 85px,rgba(0,0,0,0) 100px)"></div>
</body></html>
